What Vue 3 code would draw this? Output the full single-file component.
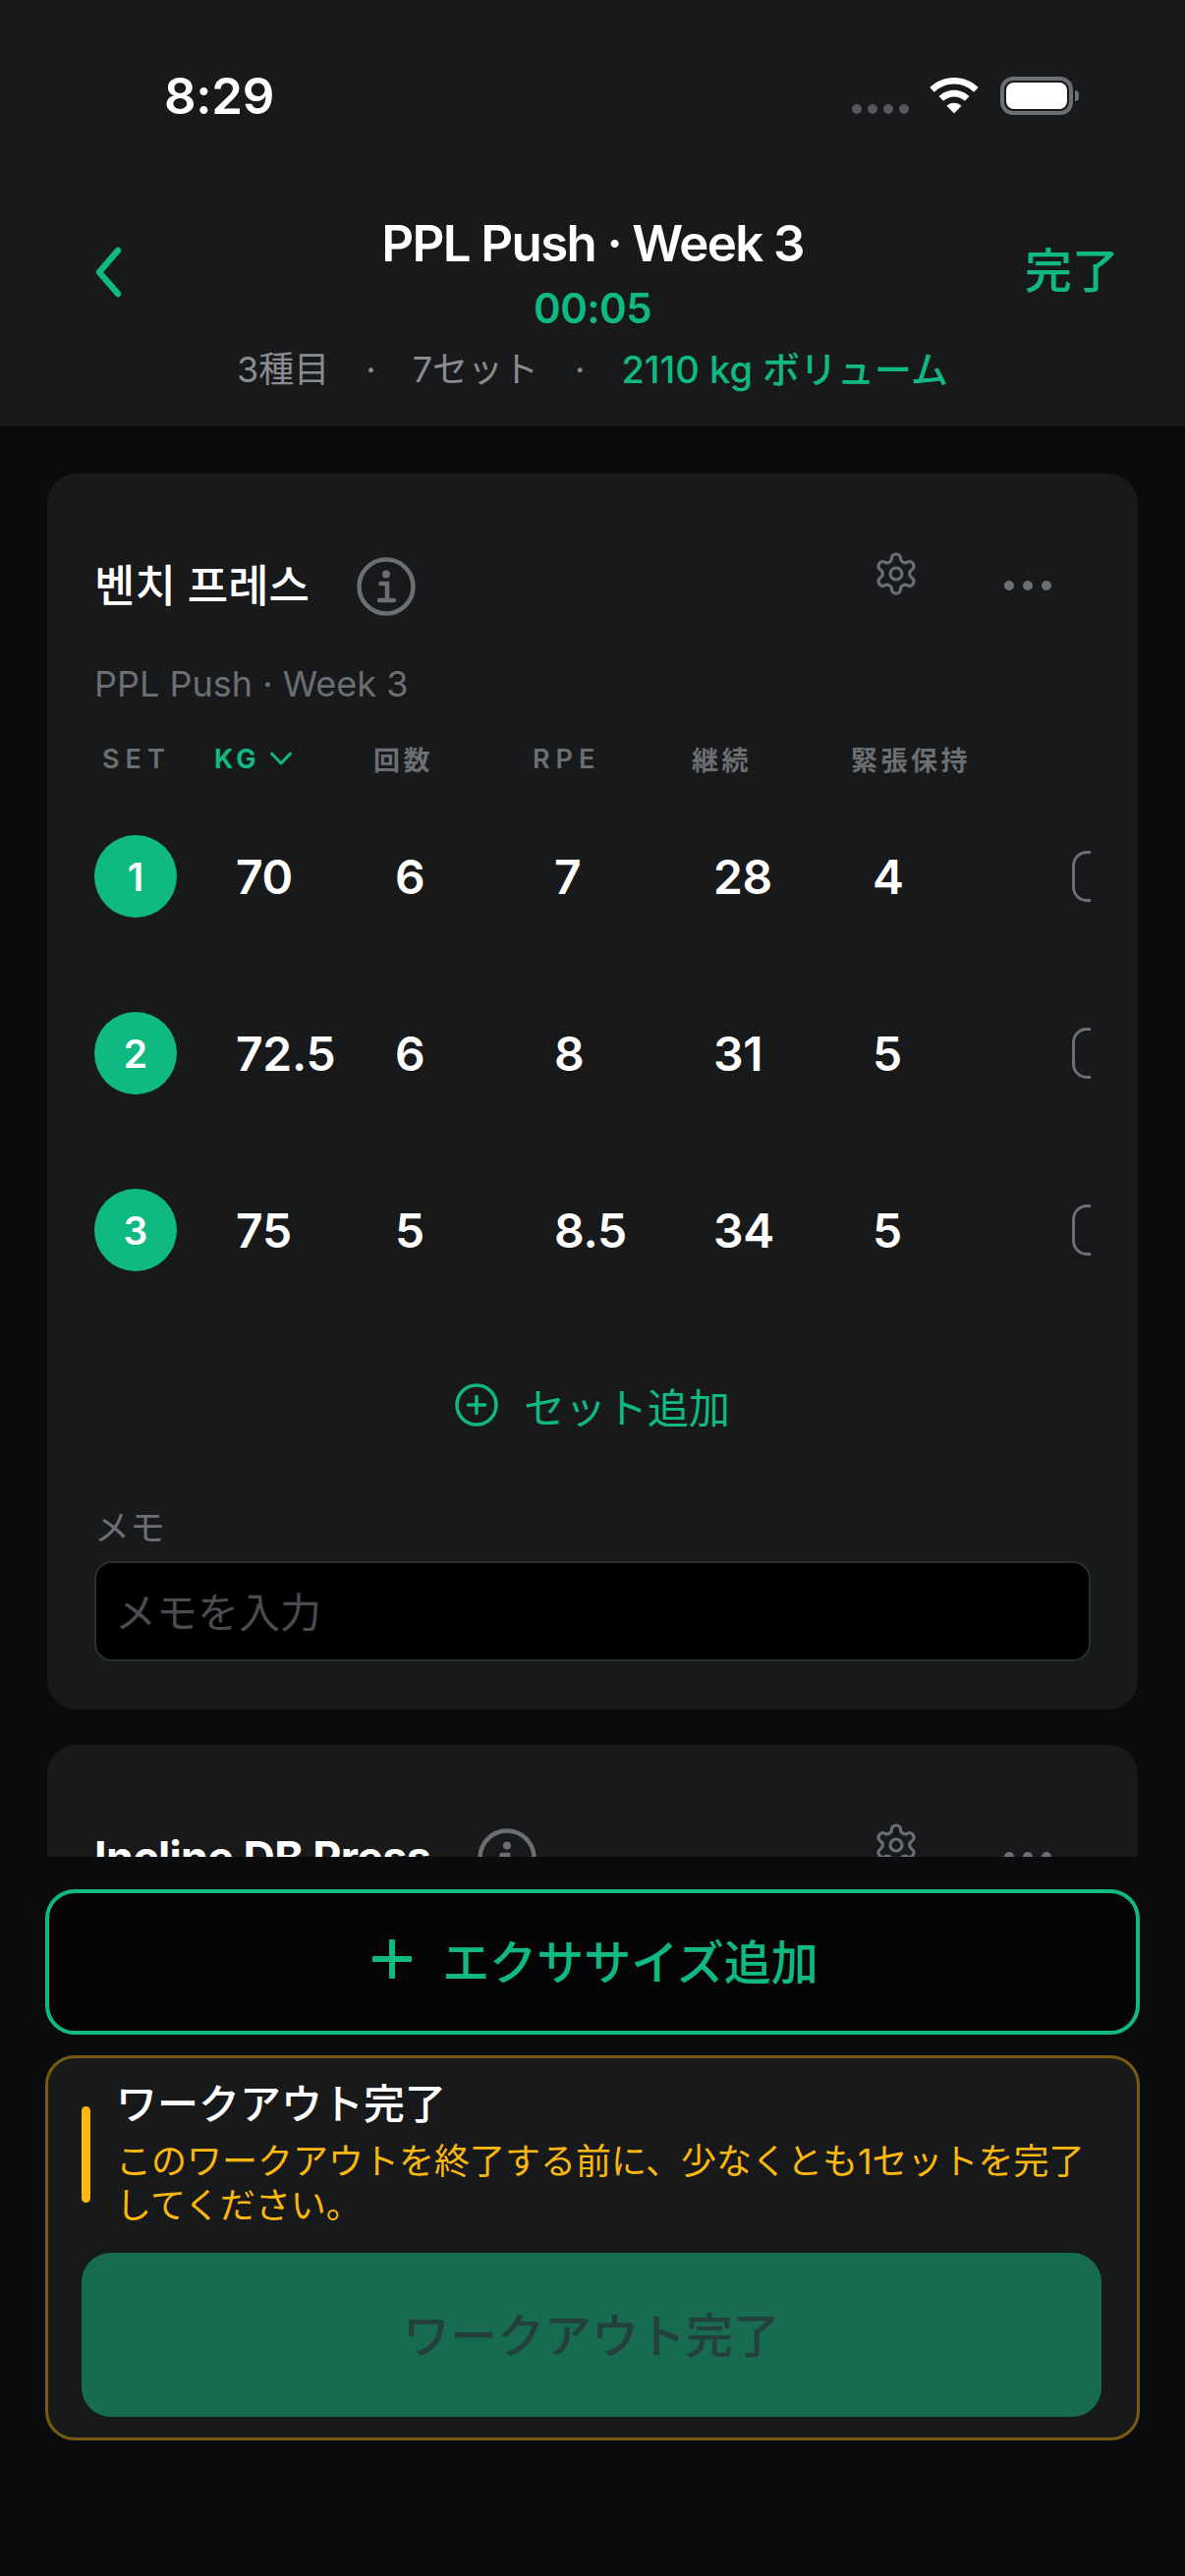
<script setup>
const columns = [
  { label: '回数', latin: false },
  { label: 'RPE', latin: true },
  { label: '継続', latin: false },
  { label: '緊張保持', latin: false },
]
const rows = [
  { n: 1, v: ['70', '6', '7', '28', '4'] },
  { n: 2, v: ['72.5', '6', '8', '31', '5'] },
  { n: 3, v: ['75', '5', '8.5', '34', '5'] },
]
const gear = 'M12.22 2h-.44a2 2 0 0 0-2 2v.18a2 2 0 0 1-1 1.73l-.43.25a2 2 0 0 1-2 0l-.15-.08a2 2 0 0 0-2.73.73l-.22.38a2 2 0 0 0 .73 2.73l.15.1a2 2 0 0 1 1 1.72v.51a2 2 0 0 1-1 1.74l-.15.09a2 2 0 0 0-.73 2.73l.22.38a2 2 0 0 0 2.73.73l.15-.08a2 2 0 0 1 2 0l.43.25a2 2 0 0 1 1 1.73V20a2 2 0 0 0 2 2h.44a2 2 0 0 0 2-2v-.18a2 2 0 0 1 1-1.73l.43-.25a2 2 0 0 1 2 0l.15.08a2 2 0 0 0 2.73-.73l.22-.39a2 2 0 0 0-.73-2.73l-.15-.08a2 2 0 0 1-1-1.74v-.5a2 2 0 0 1 1-1.74l.15-.09a2 2 0 0 0 .73-2.73l-.22-.38a2 2 0 0 0-2.73-.73l-.15.08a2 2 0 0 1-2 0l-.43-.25a2 2 0 0 1-1-1.73V4a2 2 0 0 0-2-2z'
</script>

<template>
  <div class="screen">
    <header class="top">
      <div class="status">
        <span class="time">8:29</span>
        <div class="status-icons">
          <div class="signal"><i></i><i></i><i></i><i></i></div>
          <svg class="wifi" viewBox="0 0 50 36" width="52" height="37">
            <path fill="#fff" d="M25 0C15.600 0 7.400 3.600 1 9.800l4.400 4.600C10.600 9.300 17.400 6.300 25 6.300s14.400 3 19.600 8.100L49 9.800C42.600 3.600 34.400 0 25 0z"/>
            <path fill="#fff" d="M25 12.500c-5.900 0-11.100 2.300-15.100 6.100l4.500 4.600c2.800-2.600 6.400-4.200 10.600-4.200s7.800 1.600 10.600 4.200l4.500-4.600c-4-3.800-9.200-6.100-15.100-6.100z"/>
            <path fill="#fff" d="M25 25c-2.900 0-5.400 1.100-7.300 2.900L25 35.500l7.300-7.600C30.400 26.100 27.900 25 25 25z"/>
          </svg>
          <div class="battery"><span></span></div>
        </div>
      </div>
      <div class="nav">
        <svg class="back" viewBox="0 0 34 54" width="34" height="54" fill="none">
          <path d="M26 5 7 27l19 22" stroke="#10b981" stroke-width="6.500" stroke-linecap="round" stroke-linejoin="round"/>
        </svg>
        <div class="nav-center">
          <div class="title">PPL Push · Week 3</div>
          <div class="timer">00:05</div>
          <div class="meta">
            <span>3種目</span><span class="sep">·</span><span>7セット</span><span class="sep">·</span><span class="vol">2110 kg ボリューム</span>
          </div>
        </div>
        <span class="done">完了</span>
      </div>
    </header>

    <main class="scroll">
      <section class="card">
        <div class="card-head">
          <div class="name-wrap">
            <h2 class="name name-ko">벤치 프레스</h2>
            <svg class="info" viewBox="0 0 60 60" width="60" height="60" fill="none">
              <circle cx="30" cy="30" r="27.500" stroke="#6b6e73" stroke-width="4.500"/>
              <circle cx="30" cy="17.500" r="4" fill="#6b6e73"/>
              <path d="M24.500 27H31v16M23 44h15" stroke="#6b6e73" stroke-width="4.500" stroke-linecap="round"/>
            </svg>
          </div>
          <svg class="gear" viewBox="0 0 24 24" width="48" height="48" fill="none" stroke="#6b6e73" stroke-width="1.600">
            <path :d="gear"/><circle cx="12" cy="12" r="3"/>
          </svg>
          <div class="dots"><i></i><i></i><i></i></div>
        </div>
        <div class="sub">PPL Push · Week 3</div>

        <div class="table">
          <div class="thead">
            <span class="th th-set th-latin">SET</span>
            <span class="th th-kg">KG
              <svg viewBox="0 0 24 16" width="24" height="16" fill="none"><path d="M2.500 3 12 13l9.500-10" stroke="#10b981" stroke-width="3" stroke-linecap="round" stroke-linejoin="round"/></svg>
            </span>
            <span v-for="c in columns" :key="c.label" class="th" :class="{ 'th-latin': c.latin }">{{ c.label }}</span>
          </div>
          <div v-for="r in rows" :key="r.n" class="row">
            <div class="set-cell"><span class="badge">{{ r.n }}</span></div>
            <span v-for="(v, i) in r.v" :key="i" class="val">{{ v }}</span>
            <span class="check"></span>
          </div>
        </div>

        <div class="add-set">
          <svg viewBox="0 0 44 44" width="44" height="44" fill="none" stroke="#10b981">
            <circle cx="22" cy="22" r="20" stroke-width="3.500"/>
            <path d="M22 13.500v17M13.500 22h17" stroke-width="3.500" stroke-linecap="round"/>
          </svg>
          <span>セット追加</span>
        </div>

        <label class="memo-label">メモ</label>
        <div class="memo"><span class="memo-text">メモを入力</span></div>
      </section>

      <section class="card">
        <div class="card-head">
          <div class="name-wrap">
            <h2 class="name name-en">Incline DB Press</h2>
            <svg class="info" viewBox="0 0 60 60" width="60" height="60" fill="none">
              <circle cx="30" cy="30" r="27.500" stroke="#6b6e73" stroke-width="4.500"/>
              <circle cx="30" cy="17.500" r="4" fill="#6b6e73"/>
              <path d="M24.500 27H31v16M23 44h15" stroke="#6b6e73" stroke-width="4.500" stroke-linecap="round"/>
            </svg>
          </div>
          <svg class="gear" viewBox="0 0 24 24" width="48" height="48" fill="none" stroke="#6b6e73" stroke-width="1.600">
            <path :d="gear"/><circle cx="12" cy="12" r="3"/>
          </svg>
          <div class="dots"><i></i><i></i><i></i></div>
        </div>
      </section>
    </main>

    <footer class="foot">
      <button class="add-ex">
        <svg viewBox="0 0 40 40" width="40" height="40" fill="none"><path d="M20 2v36M2 20h36" stroke="#10b981" stroke-width="6" stroke-linecap="round"/></svg>
        <span>エクササイズ追加</span>
      </button>
      <div class="finish">
        <div class="notice">
          <span class="bar"></span>
          <div>
            <div class="notice-title">ワークアウト完了</div>
            <div class="notice-text">このワークアウトを終了する前に、少なくとも1セットを完了してください。</div>
          </div>
        </div>
        <button class="finish-btn">ワークアウト完了</button>
      </div>
    </footer>
  </div>
</template>

<style>
html, body { margin: 0; background: #0a0b0d; }
</style>

<style scoped>
.screen {
  width: 1206px;
  height: 2622px;
  overflow: hidden;
  display: flex;
  flex-direction: column;
  background: #0a0b0d;
  font-family: Inter, "Noto Sans CJK JP", sans-serif;
  color: #fff;
}
.top { height: 434px; flex: none; background: #18191b; box-sizing: border-box; }
.status { height: 196px; box-sizing: border-box; padding: 68px 114px 0 167px; display: flex; justify-content: space-between; align-items: flex-start; }
.time { font-size: 51px; font-weight: 600; line-height: 60px; letter-spacing: -0.3px; }
.status-icons { display: flex; align-items: flex-end; height: 40px; margin-top: 9px; }
.signal { display: flex; gap: 6px; margin: 0 20px 1px 0; }
.signal i { width: 10px; height: 10px; border-radius: 50%; background: #55575a; }
.wifi { margin-right: 21px; margin-bottom: 1px; }
.battery { position: relative; width: 74px; height: 39px; box-sizing: border-box; border: 4px solid #6b6e73; border-radius: 13px; padding: 2px; }
.battery span { display: block; height: 100%; border-radius: 8px; background: #fff; }
.battery::after { content: ''; position: absolute; right: -10px; top: 10px; width: 4px; height: 11px; border-radius: 0 4px 4px 0; background: #6b6e73; }
.nav { display: grid; grid-template-columns: 1fr auto 1fr; align-items: start; padding: 0 67px; }
.back { margin: 54px 0 0 27px; }
.nav-center { display: flex; flex-direction: column; align-items: center; }
.title { font-size: 51px; font-weight: 600; line-height: 60px; margin-top: 22px; letter-spacing: -1.6px; white-space: nowrap; }
.timer { font-size: 42px; font-weight: 600; line-height: 50px; margin-top: 11px; color: #10b981; letter-spacing: -0.6px; }
.meta { display: flex; align-items: center; font-size: 36px; line-height: 50px; margin-top: 12px; color: #8a8c90; white-space: nowrap; }
.sep { margin: 0 37px; }
.vol { color: #10b981; font-weight: 500; font-size: 38px; }
.done { font-size: 48px; color: #10b981; line-height: 60px; margin-top: 50px; font-weight: 500; justify-self: end; }

.scroll { height: 1456px; flex: none; box-sizing: border-box; padding: 48px 48px 0; overflow: hidden; display: flex; flex-direction: column; gap: 36px; }
.card { flex: none; background: #18191b; border-radius: 30px; padding: 85px 48px 49px; box-sizing: border-box; }
.card-head { display: flex; align-items: flex-start; height: 84px; }
.name-wrap { display: flex; align-items: center; flex: 1; height: 60px; gap: 48px; }
.name { margin: 0; font-size: 45px; line-height: 60px; white-space: nowrap; }
.name-ko { font-weight: 500; font-family: Inter, "Noto Sans CJK KR", sans-serif; }
.name-en { font-weight: 700; letter-spacing: -0.7px; }
.gear { margin: -7px 86px 0 0; flex: none; overflow: visible; }
.dots { display: flex; gap: 9px; margin: 24px 40px 0 0; }
.dots i { width: 10px; height: 10px; border-radius: 50%; background: #6b6e73; }
.sub { font-size: 36px; line-height: 44px; color: #6b6e73; margin-top: 23px; }

.table { overflow: hidden; margin-top: 32px; }
.thead { display: flex; align-items: center; height: 44px; margin-bottom: 8px; }
.th { width: 162px; flex: none; font-size: 27px; font-weight: 600; letter-spacing: 3.500px; color: #6b6e73; white-space: nowrap; }
.th-latin { letter-spacing: 6px; }
.th-set { width: 122px; padding-left: 8px; box-sizing: border-box; }
.th-kg { color: #10b981; display: flex; align-items: center; gap: 9px; font-weight: 700; letter-spacing: 4px; }
.row { display: flex; align-items: center; height: 180px; }
.set-cell { width: 122px; flex: none; }
.badge { width: 84px; height: 84px; border-radius: 50%; background: #10b981; display: flex; align-items: center; justify-content: center; font-size: 39px; font-weight: 600; }
.val { width: 162px; flex: none; box-sizing: border-box; padding-left: 22px; font-size: 48px; font-weight: 600; white-space: nowrap; letter-spacing: -0.3px; }
.check { width: 52px; height: 52px; flex: none; box-sizing: border-box; border: 3px solid #6b6e73; border-radius: 15px; margin-left: 63px; }

.add-set { display: flex; align-items: center; justify-content: center; gap: 26px; height: 60px; margin-top: 58px; color: #10b981; font-size: 42px; }
.memo-label { display: block; font-size: 36px; line-height: 44px; color: #6b6e73; margin-top: 73px; }
.memo { margin-top: 12px; height: 102px; box-sizing: border-box; background: #000; border: 2px solid #26302d; border-radius: 18px; padding: 0 0 4px 19px; display: flex; align-items: center; font-size: 42px; color: #4a4c4f; }

.foot { flex: 1; box-sizing: border-box; padding: 33px 46px 0; display: flex; flex-direction: column; gap: 21px; background: #0a0b0d; }
.add-ex { height: 148px; box-sizing: border-box; border: 4px solid #10b981; border-radius: 30px; background: #050507; display: flex; align-items: center; justify-content: center; gap: 31px; padding: 0 0 6px 6px; color: #10b981; font: 500 48px Inter, "Noto Sans CJK JP", sans-serif; }
.finish { height: 392px; box-sizing: border-box; border: 3px solid #7a5a10; border-radius: 30px; background: #18191b; padding: 22px 36px 0 34px; }
.notice { display: flex; align-items: center; gap: 26px; }
.bar { width: 9px; height: 98px; flex: none; border-radius: 5px; background: #fbb80f; }
.notice-title { font-size: 42px; font-weight: 500; line-height: 50px; }
.notice-text { font-size: 36px; line-height: 45px; color: #fbb80f; margin-top: 11px; }
.finish-btn { display: block; width: 100%; height: 167px; margin-top: 25px; padding: 0 0 6px; border: 0; border-radius: 30px; background: #176b50; color: #24403a; font: 500 48px Inter, "Noto Sans CJK JP", sans-serif; }
</style>
